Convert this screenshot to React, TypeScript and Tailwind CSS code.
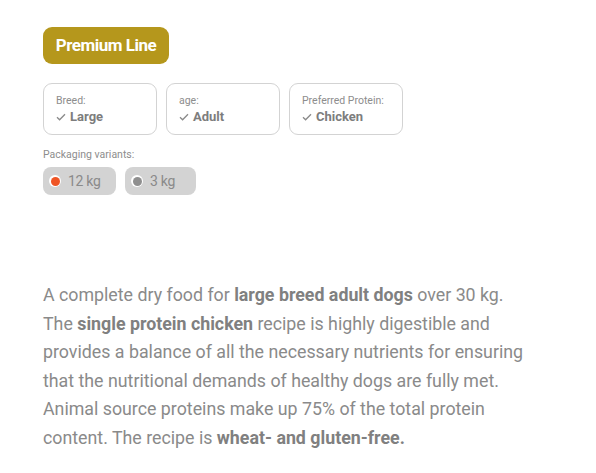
const specs = [
  { label: "Breed:", value: "Large" },
  { label: "age:", value: "Adult" },
  { label: "Preferred Protein:", value: "Chicken" },
];

const variants = [
  { size: "12 kg", active: true, width: "w-[73px]" },
  { size: "3 kg", active: false, width: "w-[71px]" },
];

function Tick() {
  return (
    <svg width="10" height="8" viewBox="0 0 10 8" className="shrink-0">
      <path d="M1 4.2 L3.6 6.8 L9 1.2" fill="none" stroke="#8a8a8a" strokeWidth="1.3" />
    </svg>
  );
}

export default function App() {
  return (
    <div
      className="min-h-[473px] w-[596px] bg-white pl-[43px] pt-[27px] text-[#8a8a8a]"
      style={{ fontFamily: "Roboto, 'Noto Sans', sans-serif" }}
    >
      <div className="inline-flex h-[37px] w-[126px] items-center justify-center rounded-[9px] bg-[#b5971c] text-[17px] font-bold tracking-[-0.5px] text-white">
        Premium Line
      </div>

      <div className="mt-[19px] flex gap-[9px]">
        {specs.map((s) => (
          <div
            key={s.label}
            className="flex h-[52px] w-[114px] flex-col justify-center rounded-[9px] border border-[#d3d3d3] pl-[12px]"
          >
            <span className="text-[10.5px] leading-[13px] text-[#8d8d8d]">
              {s.label}
            </span>
            <span className="mt-[2px] flex items-center gap-[4px] text-[13px] font-bold leading-[16px] text-[#7d7d7d]">
              <Tick />
              {s.value}
            </span>
          </div>
        ))}
      </div>

      <p className="mt-[13px] text-[10.5px] leading-[13px] text-[#8d8d8d]">
        Packaging variants:
      </p>
      <div className="mt-[6px] flex gap-[9px]">
        {variants.map((v) => (
          <div
            key={v.size}
            className={`flex h-[28px] ${v.width} items-center gap-[7px] rounded-[8px] bg-[#d3d3d3] pl-[6px] text-[14px] tracking-[-0.3px] text-[#8a8a8a]`}
          >
            <span className="flex h-[12px] w-[12px] items-center justify-center rounded-full bg-white">
              <span
                className={
                  v.active
                    ? "h-[9px] w-[9px] rounded-full bg-[#ef5525]"
                    : "h-[9px] w-[9px] rounded-full bg-[#8f8f8f]"
                }
              />
            </span>
            {v.size}
          </div>
        ))}
      </div>

      <p className="mt-[86px] w-[490px] text-[17.8px] leading-[28.6px] text-[#8a8a8a]">
        A complete dry food for <b className="text-[#808080]">large breed adult dogs</b> over 30 kg.
        The <b className="text-[#808080]">single protein chicken</b> recipe is highly digestible and
        provides a balance of all the necessary nutrients for ensuring that the nutritional demands
        of healthy dogs are fully met. Animal source proteins make up 75% of the total protein
        content. The recipe is <b className="text-[#808080]">wheat- and gluten-free.</b>
      </p>
    </div>
  );
}
